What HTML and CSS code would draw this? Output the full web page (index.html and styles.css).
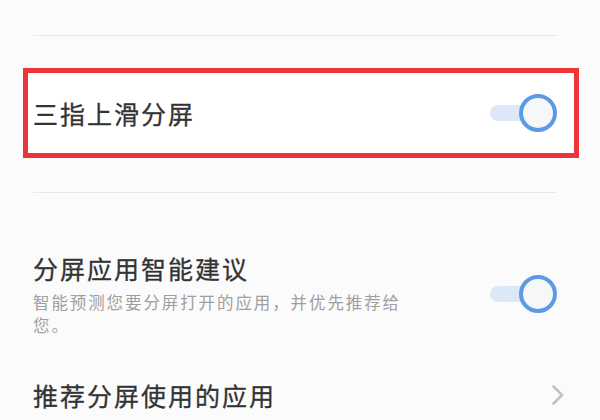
FILE: index.html
```html
<!DOCTYPE html>
<html lang="zh-CN">
<head>
<meta charset="utf-8">
<title>分屏设置</title>
<link rel="stylesheet" href="styles.css">
</head>
<body>
<div class="list">
  <div class="divider first"></div>

  <div class="highlight">
    <div class="row">
      <span class="title">三指上滑分屏</span>
      <span class="toggle"><span class="track"></span><span class="knob"></span></span>
    </div>
  </div>

  <div class="divider second"></div>

  <div class="row suggest">
    <div class="texts">
      <div class="title">分屏应用智能建议</div>
      <div class="sub">智能预测您要分屏打开的应用，并优先推荐给您。</div>
    </div>
    <span class="toggle"><span class="track"></span><span class="knob"></span></span>
  </div>

  <div class="row nav">
    <span class="title">推荐分屏使用的应用</span>
    <svg class="chevron" width="14" height="22" viewBox="0 0 14 22">
      <polyline points="2.5,2.5 11,11 2.5,19.5" fill="none" stroke="#c2c2c2" stroke-width="2.6" stroke-linecap="round" stroke-linejoin="round"/>
    </svg>
  </div>
</div>
</body>
</html>
```

FILE: styles.css
```css
html, body {
  margin: 0;
  padding: 0;
  background: #fbfbfb;
}

body {
  width: 600px;
  height: 420px;
  overflow: hidden;
  font-family: "Noto Sans CJK SC", "Noto Sans", sans-serif;
}

.list {
  padding: 35px 43px 0 33px;
  display: flex;
  flex-direction: column;
}

.divider {
  height: 1px;
  background: #e9e9e9;
}

.highlight {
  margin: 32px -22px 0 -10px;
  height: 90px;
  box-sizing: border-box;
  border: 5px solid #ef3439;
  background: #ffffff;
  padding: 0 17px 0 5px;
  display: flex;
  align-items: center;
}

.highlight .row {
  flex: 1;
}

.divider.second {
  margin-top: 34px;
}

.row {
  display: flex;
  align-items: center;
  justify-content: space-between;
}

.title {
  font-size: 25px;
  line-height: 32px;
  letter-spacing: 2px;
  color: #333333;
  -webkit-text-stroke: 0.3px #333333;
}

.sub {
  margin-top: 7px;
  width: 380px;
  font-size: 16.5px;
  line-height: 22.5px;
  letter-spacing: 1.9px;
  color: #9f9f9f;
}

.suggest {
  margin-top: 59px;
}

.nav {
  margin-top: 43px;
  margin-right: -8px;
}

.toggle {
  width: 67px;
  height: 38px;
  display: flex;
  align-items: center;
  flex-shrink: 0;
}

.track {
  width: 50px;
  height: 16px;
  border-radius: 8px;
  background: #dde8f7;
}

.knob {
  width: 38px;
  height: 38px;
  box-sizing: border-box;
  border-radius: 50%;
  border: 4.5px solid #5d9ae6;
  background: #f6f7f9;
  margin-left: -21px;
}

.chevron {
  display: block;
}
```
